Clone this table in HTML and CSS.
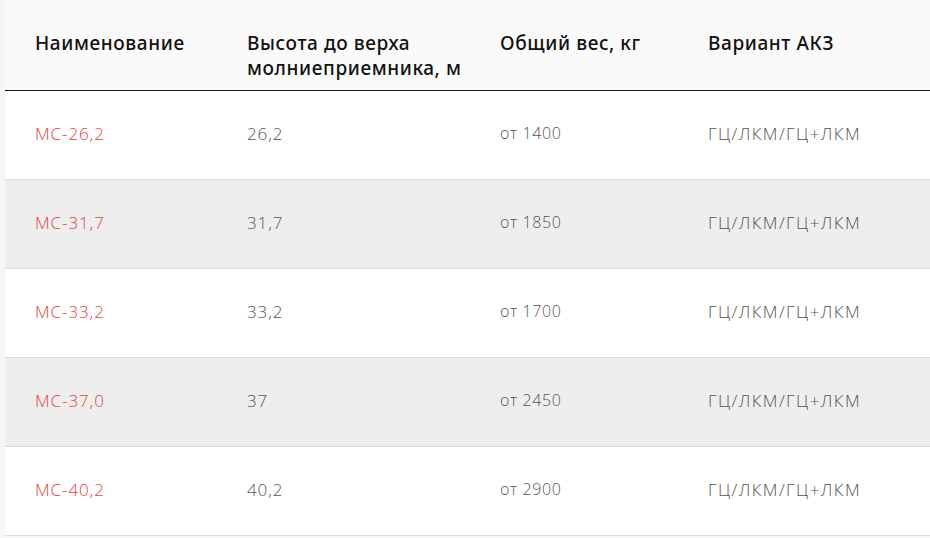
FILE: index.html
```html
<!DOCTYPE html>
<html lang="ru">
<head>
<meta charset="utf-8">
<link rel="stylesheet" href="styles.css">
</head>
<body>
<div class="wrap">
<table class="spec">
  <thead>
    <tr>
      <th class="c1">Наименование</th>
      <th class="c2">Высота до верха<br>молниеприемника, м</th>
      <th class="c3">Общий вес, кг</th>
      <th class="c4">Вариант АКЗ</th>
    </tr>
  </thead>
  <tbody>
    <tr><td class="name">МС-26,2</td><td>26,2</td><td class="w">от 1400</td><td class="akz">ГЦ/ЛКМ/ГЦ+ЛКМ</td></tr>
    <tr class="alt"><td class="name">МС-31,7</td><td>31,7</td><td class="w">от 1850</td><td class="akz">ГЦ/ЛКМ/ГЦ+ЛКМ</td></tr>
    <tr><td class="name">МС-33,2</td><td>33,2</td><td class="w">от 1700</td><td class="akz">ГЦ/ЛКМ/ГЦ+ЛКМ</td></tr>
    <tr class="alt"><td class="name">МС-37,0</td><td>37</td><td class="w">от 2450</td><td class="akz">ГЦ/ЛКМ/ГЦ+ЛКМ</td></tr>
    <tr><td class="name">МС-40,2</td><td>40,2</td><td class="w">от 2900</td><td class="akz">ГЦ/ЛКМ/ГЦ+ЛКМ</td></tr>
  </tbody>
</table>
</div>
</body>
</html>
```
FILE: styles.css
```css
html, body {
  margin: 0;
  padding: 0;
  background: #f6f6f6;
}
.wrap {
  padding-left: 5px;
}
.spec {
  width: 925px;
  border-collapse: collapse;
  table-layout: fixed;
  background: #fff;
  font-family: "Open Sans", "Noto Sans", sans-serif;
}
.spec th,
.spec td {
  box-sizing: border-box;
}
.spec th {
  background: #fafafa;
  text-align: left;
  font-family: "Noto Sans", "Open Sans", sans-serif;
  font-weight: 500;
  font-size: 19px;
  letter-spacing: 0.6px;
  line-height: 25px;
  color: #111;
  padding: 31px 0 8px 30px;
  height: 90px;
  vertical-align: top;
  border-bottom: 1px solid #111;
}
.spec .c1 { width: 212px; }
.spec .c2 { width: 253px; }
.spec .c3 { width: 208px; }
.spec td {
  height: 89px;
  padding: 0 0 3px 30px;
  vertical-align: middle;
  font-size: 17px;
  letter-spacing: 0.9px;
  font-weight: 300;
  color: #555;
  border-bottom: 1px solid #dcdcdc;
}
.spec td.w { font-size: 16px; letter-spacing: 0.6px; }
.spec td.akz { letter-spacing: 1.4px; }
.spec td.name { color: #e8413a; }
.spec tr.alt td { background: #eeeeee; }
```
